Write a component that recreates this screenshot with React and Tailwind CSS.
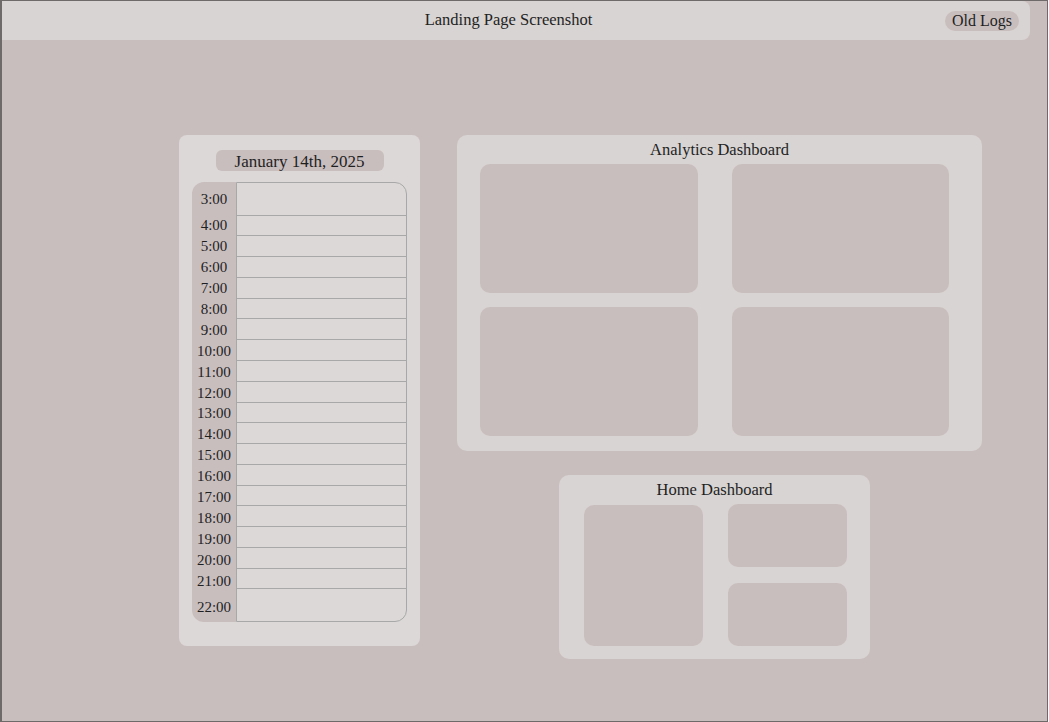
const hours = ['3:00', '4:00', '5:00', '6:00', '7:00', '8:00', '9:00', '10:00', '11:00', '12:00', '13:00', '14:00', '15:00', '16:00', '17:00', '18:00', '19:00', '20:00', '21:00', '22:00']

const serif = "font-['Liberation_Serif','Times_New_Roman',serif]"

function rowFlex(i) {
  return i === 0 || i === hours.length - 1 ? 'flex-[1.6]' : 'flex-1'
}

function DayPlanner() {
  return (
    <div className="flex h-[511px] w-[241px] flex-col items-center rounded-lg bg-[#dcd8d7] px-[13px] pt-[15px]">
      <div className="flex h-[21px] w-[168px] items-center justify-center rounded-md bg-[#c9bebe] pt-[1px] text-[17px] leading-none text-[#1f1f1f]">
        January 14th, 2025
      </div>
      <div className="mt-[11px] flex h-[440px] w-full">
        <div className="flex w-[44px] flex-col rounded-l-xl bg-[#c9bebe]">
          {hours.map((h, i) => (
            <div key={h} className={`${rowFlex(i)} flex items-center justify-center pt-[3px] text-[15px] leading-none text-[#1f1f1f]`}>
              {h}
            </div>
          ))}
        </div>
        <div className="flex flex-1 flex-col divide-y divide-[#a8a8a8] rounded-r-xl border border-[#a8a8a8] bg-[#dcd8d7]">
          {hours.map((h, i) => (
            <div key={h} className={rowFlex(i)} />
          ))}
        </div>
      </div>
    </div>
  )
}

function Tile({ className = '' }) {
  return <div className={`rounded-[10px] bg-[#c9bebe] ${className}`} />
}

function AnalyticsDashboard() {
  return (
    <div className="w-[525px] rounded-[10px] bg-[#d8d4d3] pt-[4px] pb-[15px]">
      <h2 className="h-[22px] text-center text-[16.5px] leading-[22px] text-[#1f1f1f]">Analytics Dashboard</h2>
      <div className="mt-[3px] grid grid-cols-[218px_217px] grid-rows-[129px_129px] gap-x-[34px] gap-y-[14px] pl-[23px]">
        <Tile />
        <Tile />
        <Tile />
        <Tile />
      </div>
    </div>
  )
}

function HomeDashboard() {
  return (
    <div className="ml-[102px] w-[311px] rounded-[10px] bg-[#d8d4d3] pt-[4px] pb-[13px]">
      <h2 className="h-[22px] text-center text-[16.5px] leading-[22px] text-[#1f1f1f]">Home Dashboard</h2>
      <div className="mt-[3px] grid grid-cols-[119px_119px] grid-rows-[63px_63px] gap-x-[25px] gap-y-[16px] pl-[25px]">
        <Tile className="row-span-2 mt-[1px]" />
        <Tile />
        <Tile />
      </div>
    </div>
  )
}

export default function App() {
  return (
    <div className={`${serif} h-[722px] w-[1048px] overflow-hidden border border-l-2 border-[#6e6a6a] bg-[#c9bebe]`}>
      <header className="mr-[17px] flex h-[39px] items-center rounded-r-lg bg-[#d8d4d3] pr-[11px]">
        <div className="flex-1 pl-[70px] text-center text-[16.5px] text-[#1f1f1f]">Landing Page Screenshot</div>
        <button className="flex h-[20px] items-center rounded-full bg-[#c9bebe] px-[7px] pt-[1px] text-[16px] leading-none text-[#1f1f1f]">
          Old Logs
        </button>
      </header>
      <main className="flex items-start gap-[37px] pt-[95px] pl-[177px]">
        <DayPlanner />
        <div className="flex flex-col items-start gap-[24px]">
          <AnalyticsDashboard />
          <HomeDashboard />
        </div>
      </main>
    </div>
  )
}
